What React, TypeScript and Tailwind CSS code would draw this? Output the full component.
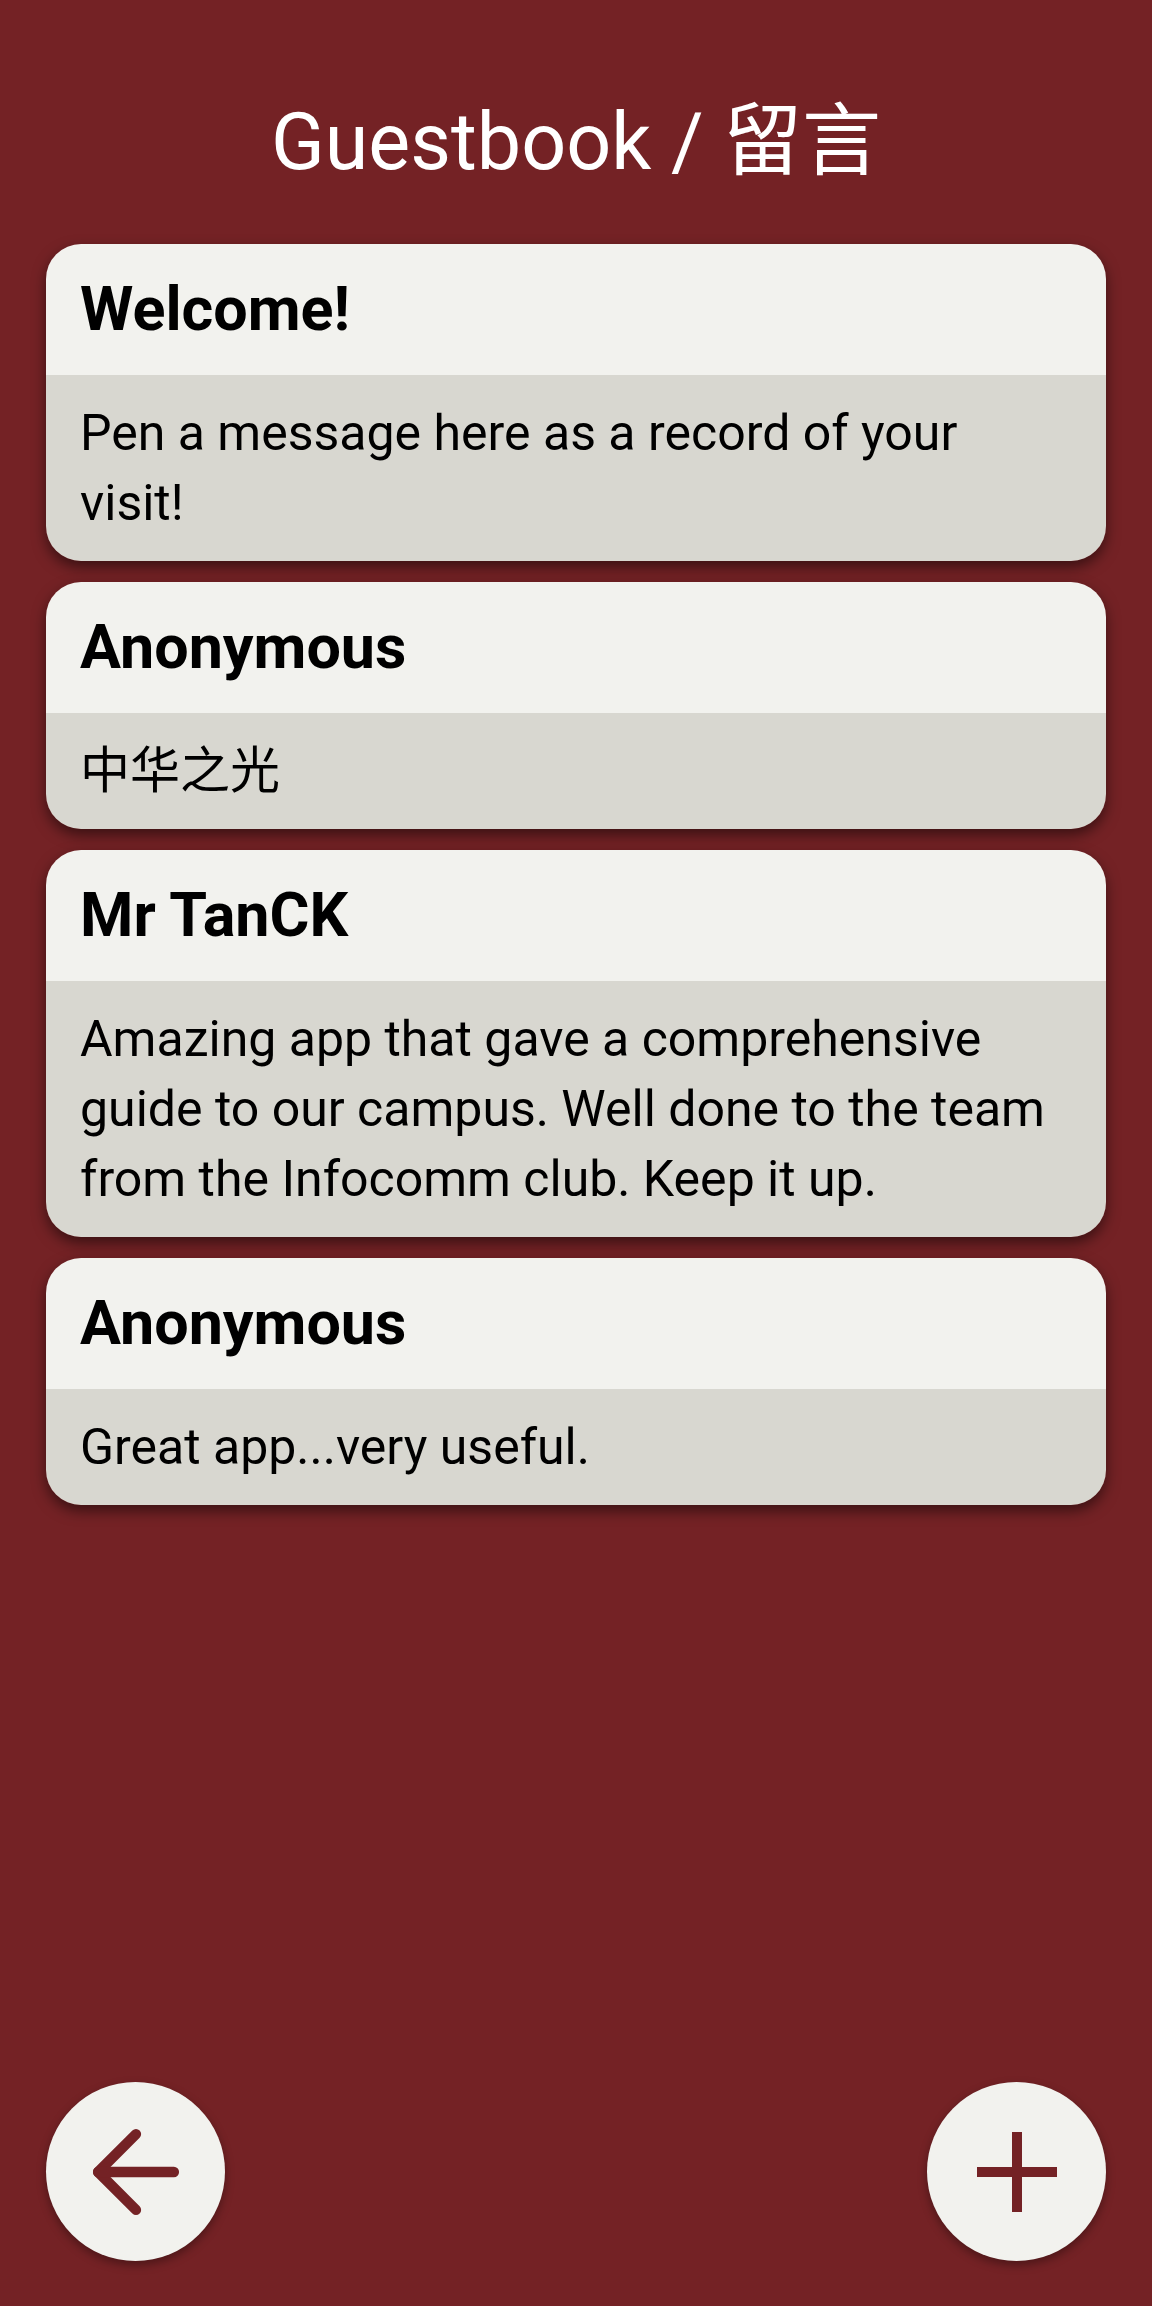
import { ArrowLeft } from 'lucide-react';

const entries = [
  { name: 'Welcome!', message: 'Pen a message here as a record of your visit!' },
  { name: 'Anonymous', message: '中华之光' },
  {
    name: 'Mr TanCK',
    message:
      'Amazing app that gave a comprehensive guide to our campus. Well done to the team from the Infocomm club. Keep it up.',
  },
  { name: 'Anonymous', message: 'Great app...very useful.' },
];

export default function App() {
  return (
    <div
      className="flex flex-col h-[2306px] bg-[#742225] px-[46px] pb-[45px]"
      style={{ fontFamily: 'Roboto, "Noto Sans CJK SC", sans-serif' }}
    >
      <h1 className="pt-[95px] text-center text-white text-[79px] leading-[94px] font-normal">
        Guestbook / 留言
      </h1>

      {/* Entries */}
      <div className="flex flex-col gap-[21px] mt-[55px]">
        {entries.map((entry, i) => (
          <div
            key={i}
            className="rounded-[35px] overflow-hidden shadow-[0_6px_14px_rgba(0,0,0,0.5)]"
          >
            <div className="h-[131px] flex items-center px-[34px] bg-[#f2f2ee] text-black text-[61px] font-bold">
              {entry.name}
            </div>
            <div className="px-[34px] py-[23px] bg-[#d8d7d0] text-black text-[50px] leading-[70px]">
              {entry.message}
            </div>
          </div>
        ))}
      </div>

      {/* Bottom buttons */}
      <div className="mt-auto flex justify-between items-end">
        <button className="w-[179px] h-[179px] rounded-full bg-[#f2f2ee] flex items-center justify-center shadow-[0_4px_10px_rgba(0,0,0,0.35)]">
          <ArrowLeft size={130} strokeWidth={1.9} className="text-[#742225]" />
        </button>
        <button className="w-[179px] h-[179px] rounded-full bg-[#f2f2ee] flex items-center justify-center shadow-[0_4px_10px_rgba(0,0,0,0.35)]">
          <svg width="80" height="80" viewBox="0 0 80 80">
            <path d="M40 0V80M0 40H80" stroke="#742225" strokeWidth="10" fill="none" />
          </svg>
        </button>
      </div>
    </div>
  );
}
